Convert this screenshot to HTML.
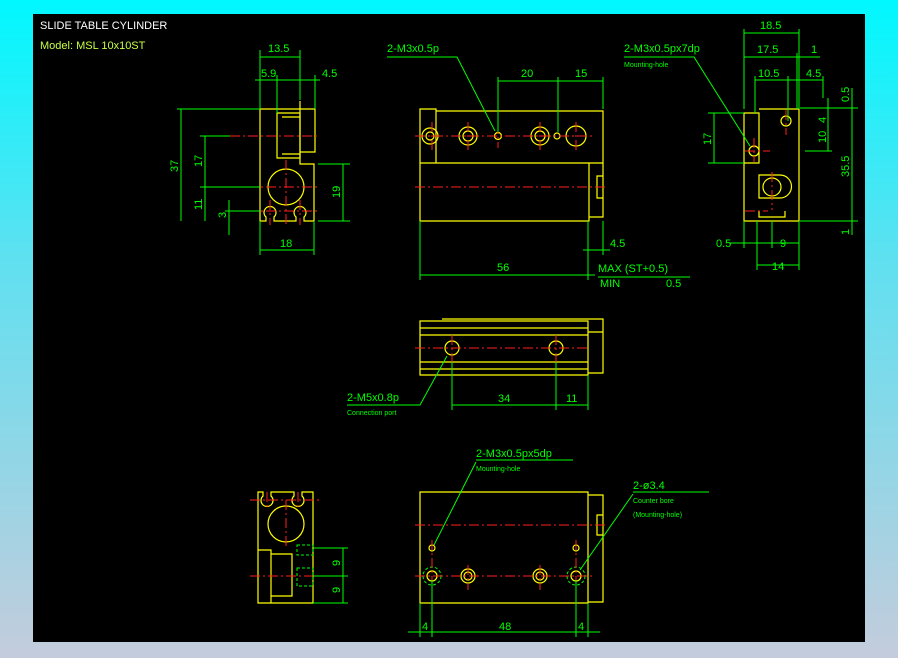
<!DOCTYPE html>
<html><head><meta charset="utf-8"><style>
html,body{margin:0;padding:0;width:898px;height:658px;overflow:hidden;background:linear-gradient(#00f8ff 0%,#60e0f0 40%,#c4ccdc 100%);}
svg{position:absolute;left:0;top:0}
text{font-family:"Liberation Sans",sans-serif;}
</style></head><body>
<svg width="898" height="658" viewBox="0 0 898 658">
<rect x="33" y="14" width="832" height="628" fill="#000"/>
<text x="40" y="29" fill="#fff" font-size="11">SLIDE TABLE CYLINDER</text>
<text x="40" y="49" fill="#c8ff40" font-size="11">Model: MSL 10x10ST</text>

<g fill="none" stroke="#ffff00" stroke-width="1.2">
<path d="M260 109H300V101M300 109V152H315V109H300M260 109V221H266V217a6 6 0 1 1 8 0V221H296V217a6 6 0 1 1 8 0V221H314V164H300V152"/>
<path d="M277 113H300V158H277Z M282 117H300V154H282"/>
<circle cx="286" cy="187" r="18"/>
<path d="M420 109H436V163H420Z M436 111H603V163H436 M420 163V221H589V163 M589 163H603V217H589 M597 176H603V198H597Z"/>
<circle cx="430" cy="136" r="8"/><circle cx="430" cy="136" r="4"/>
<circle cx="468" cy="136" r="9"/><circle cx="468" cy="136" r="5"/>
<circle cx="498" cy="136" r="3.5"/>
<circle cx="540" cy="136" r="9"/><circle cx="540" cy="136" r="5"/>
<circle cx="557" cy="136" r="3"/>
<circle cx="576" cy="136" r="10"/>
<path d="M759 109H799V221H759 M744 113H759V163H744Z M744 163V221H759 M759 175H780a11 11 0 0 1 0 23H759Z M759 211V217H785V211"/>
<circle cx="786" cy="121" r="5"/><circle cx="754" cy="151" r="5"/><circle cx="772" cy="187" r="9"/>
<path d="M420 321H588V375H420Z M420 328H588 M420 335H588 M420 362H588 M420 369H588 M442 319H603V373H588 M588 332H603"/>
<circle cx="452" cy="348" r="7"/><circle cx="556" cy="348" r="7"/>
<path d="M420 492H588V603H420Z M588 495H603V602H588 M597 515H603V535H597Z"/>
<circle cx="432" cy="548" r="3"/><circle cx="576" cy="548" r="3"/>
<circle cx="432" cy="576" r="5"/><circle cx="468" cy="576" r="7"/><circle cx="468" cy="576" r="4"/>
<circle cx="540" cy="576" r="7"/><circle cx="540" cy="576" r="4"/><circle cx="576" cy="576" r="5"/>
<path d="M258 550V492H263V496a6 6 0 1 0 8 0V492H294V496a6 6 0 1 0 8 0V492H313V550 M258 550H271V603H313V550 M271 554H292V596H271 M258 550V603H271"/>
<circle cx="286" cy="524" r="18"/>
</g>
<g fill="none" stroke="#00ff00" stroke-width="1" stroke-dasharray="3 2">
<circle cx="432" cy="576" r="9"/><circle cx="576" cy="576" r="9"/>
<path d="M297 545H313V555H297Z M297 568H313V586H297Z"/>
</g>
<g fill="none" stroke="#ff2020" stroke-width="1" stroke-dasharray="10 3 2 3">
<path d="M230 136H320M230 187H320M230 211H318M286 160V225M270 200V225M300 200V225"/>
<path d="M415 136H595M415 187H605M432 122V150M468 122V150M498 124V148M540 122V150M576 122V150"/>
<path d="M745 151H770M786 110V135M772 172V210M754 138V162M745 211H768"/>
<path d="M415 348H590M452 335V362M556 335V362"/>
<path d="M415 525H605M415 576H595M432 540V595M468 565V590M540 565V590M576 540V595"/>
<path d="M250 500H320M250 576H320M286 500V548M267 492V508M298 492V508"/>
</g>
<g fill="none" stroke="#00ff00" stroke-width="1">
<path d="M260 57H300M260 50V109M300 50V100M255 80H320M277 75V113M315 75V109M181 109V221M177 109H260M205 136V221M200 136H230M200 187H260M229 200V235M225 211H260M343 164V221M318 164H350M318 221H350M260 221V255M314 221V255M260 250H314"/>
<path d="M387 57H457L495 131M498 77V132M558 77V132M603 77V109M498 81H603M420 221V280M588 221V280M603 221V255M583 250H610M420 275H595M598 277H690"/>
<path d="M744 33H799M744 29V109M799 29V109M744 57H820M797 53V109M755 80H823M755 76V113M788 76V121M823 76V98M708 113H744M708 163H744M714 113V163M800 108H858M805 151H832M828 98V151M852 88V221M800 221H858M852 221V235M624 57H694L750 146M744 221V248M772 221V248M799 221V270M757 221V270M730 243H799M757 265H799"/>
<path d="M452 362V410M556 362V410M588 375V410M452 405H588M347 405H420L447 356"/>
<path d="M420 603V637M432 580V637M576 580V637M588 603V637M408 632H600M476 460H573M476 462L434 545M633 492H709M633 494L580 570M313 548H348M313 576H348M313 603H348M343 548V603"/>
</g>
<g fill="#00ff00" font-size="11">
<text x="268" y="52">13.5</text><text x="261" y="77">5.9</text><text x="322" y="77">4.5</text>
<text x="178" y="172" transform="rotate(-90 178 172)">37</text>
<text x="202" y="167" transform="rotate(-90 202 167)">17</text>
<text x="202" y="210" transform="rotate(-90 202 210)">11</text>
<text x="226" y="218" transform="rotate(-90 226 218)">3</text>
<text x="340" y="198" transform="rotate(-90 340 198)">19</text>
<text x="280" y="247">18</text>
<text x="387" y="52">2-M3x0.5p</text><text x="521" y="77">20</text><text x="575" y="77">15</text>
<text x="610" y="247">4.5</text><text x="497" y="271">56</text>
<text x="598" y="272">MAX (ST+0.5)</text><text x="600" y="287">MIN</text><text x="666" y="287">0.5</text>
<text x="624" y="52">2-M3x0.5px7dp</text><text x="624" y="67" font-size="7">Mounting-hole</text>
<text x="760" y="29">18.5</text><text x="757" y="53">17.5</text><text x="811" y="53">1</text>
<text x="758" y="77">10.5</text><text x="806" y="77">4.5</text>
<text x="711" y="145" transform="rotate(-90 711 145)">17</text>
<text x="849" y="102" transform="rotate(-90 849 102)">0.5</text>
<text x="826" y="123" transform="rotate(-90 826 123)">4</text>
<text x="826" y="143" transform="rotate(-90 826 143)">10</text>
<text x="849" y="177" transform="rotate(-90 849 177)">35.5</text>
<text x="849" y="235" transform="rotate(-90 849 235)">1</text>
<text x="716" y="247">0.5</text><text x="780" y="247">9</text><text x="772" y="270">14</text>
<text x="347" y="401">2-M5x0.8p</text><text x="347" y="415" font-size="7">Connection port</text>
<text x="498" y="402">34</text><text x="566" y="402">11</text>
<text x="476" y="457">2-M3x0.5px5dp</text><text x="476" y="471" font-size="7">Mounting-hole</text>
<text x="633" y="489">2-ø3.4</text><text x="633" y="503" font-size="7">Counter bore</text><text x="633" y="517" font-size="7">(Mounting-hole)</text>
<text x="340" y="566" transform="rotate(-90 340 566)">9</text>
<text x="340" y="593" transform="rotate(-90 340 593)">9</text>
<text x="422" y="630">4</text><text x="499" y="630">48</text><text x="578" y="630">4</text>
</g>
</svg>
</body></html>
